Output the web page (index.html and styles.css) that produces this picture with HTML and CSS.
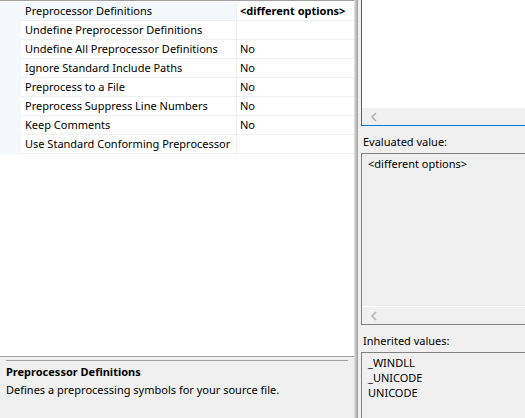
FILE: index.html
```html
<!DOCTYPE html>
<html>
<head>
<meta charset="utf-8">
<link rel="stylesheet" href="styles.css">
</head>
<body>
<div class="app">
  <div class="left">
    <div class="grid">
      <div class="row selected"><div class="gutter"></div><div class="name">Preprocessor Definitions</div><div class="value bold">&lt;different options&gt;</div></div>
      <div class="row"><div class="gutter"></div><div class="name">Undefine Preprocessor Definitions</div><div class="value"></div></div>
      <div class="row"><div class="gutter"></div><div class="name">Undefine All Preprocessor Definitions</div><div class="value">No</div></div>
      <div class="row"><div class="gutter"></div><div class="name">Ignore Standard Include Paths</div><div class="value">No</div></div>
      <div class="row"><div class="gutter"></div><div class="name">Preprocess to a File</div><div class="value">No</div></div>
      <div class="row"><div class="gutter"></div><div class="name">Preprocess Suppress Line Numbers</div><div class="value">No</div></div>
      <div class="row"><div class="gutter"></div><div class="name">Keep Comments</div><div class="value">No</div></div>
      <div class="row"><div class="gutter"></div><div class="name">Use Standard Conforming Preprocessor</div><div class="value"></div></div>
    </div>
    <div class="desc">
      <div class="desc-title">Preprocessor Definitions</div>
      <div class="desc-text">Defines a preprocessing symbols for your source file.</div>
    </div>
  </div>
  <div class="splitter"></div>
  <div class="right">
    <div class="box box-edit">
      <div class="box-content white"></div>
      <div class="hscroll"><svg class="chev" width="8" height="10" viewBox="0 0 8 10"><path d="M6 1 L2 5 L6 9" fill="none" stroke="#b4b4b4" stroke-width="1.6"/></svg></div>
    </div>
    <div class="label first">Evaluated value:</div>
    <div class="box box-eval">
      <div class="box-content eval-content"><div class="line">&lt;different options&gt;</div></div>
      <div class="hscroll topline"><svg class="chev" width="8" height="10" viewBox="0 0 8 10"><path d="M6 1 L2 5 L6 9" fill="none" stroke="#b4b4b4" stroke-width="1.6"/></svg></div>
    </div>
    <div class="label second">Inherited values:</div>
    <div class="box box-inh">
      <div class="box-content inh-content">
        <div class="line">_WINDLL</div>
        <div class="line">_UNICODE</div>
        <div class="line">UNICODE</div>
      </div>
    </div>
  </div>
</div>
</body>
</html>
```

FILE: styles.css
```css
html, body {
  margin: 0;
  padding: 0;
}
body {
  width: 525px;
  height: 418px;
  overflow: hidden;
  background: #f0f0f0;
  font-family: "Noto Sans", "Open Sans", sans-serif;
  font-size: 11px;
  color: #000;
}
.app {
  display: flex;
  width: 525px;
  height: 418px;
}
.left {
  width: 354px;
  display: flex;
  flex-direction: column;
  background: #fff;
  border-top: 1px solid #a0a0a0;
  box-sizing: border-box;
}
.grid {
  flex: 1;
  background: #fff;
  padding-top: 1px;
}
.row {
  display: flex;
  height: 19px;
  box-sizing: border-box;
}
.gutter {
  width: 21px;
  flex: none;
  background: #f4f7fb;
}
.name {
  width: 216px;
  flex: none;
  box-sizing: border-box;
  padding-left: 4px;
  line-height: 18px;
  border-bottom: 1px solid #eef0f2;
  border-right: 1px solid #eef0f2;
  white-space: nowrap;
  overflow: hidden;
}
.value {
  flex: 1;
  box-sizing: border-box;
  padding-left: 3px;
  line-height: 18px;
  border-bottom: 1px solid #eef0f2;
  white-space: nowrap;
  overflow: hidden;
}
.row.selected .name {
  background: #f4f7fb;
}
.bold {
  font-weight: bold;
}
.desc {
  height: 62px;
  box-sizing: border-box;
  border-top: 1px solid #a0a0a0;
  background: #f0f0f0;
  padding: 0 6px;
}
.desc::before {
  content: "";
  display: block;
  height: 3px;
  border-bottom: 1px solid #a0a0a0;
}
.desc-title {
  font-weight: bold;
  line-height: 18px;
  margin-top: 2px;
}
.desc-text {
  line-height: 18px;
}
.splitter {
  width: 4px;
  flex: none;
  background: linear-gradient(to right, #e4e4e4, #9a9a9a);
}
.right {
  flex: 1;
  overflow: hidden;
  padding-left: 3px;
  background: #f0f0f0;
}
.box {
  margin-right: -6px;
  border: 1px solid #828282;
  box-sizing: border-box;
}
.box-edit {
  border-color: #0078d7;
  margin-top: -1px;
}
.box-content.white {
  height: 108px;
  background: #fff;
}
.hscroll {
  height: 17px;
  background: #f0f0f0;
  display: flex;
  align-items: center;
  padding-left: 8px;
}
.hscroll.topline {
  border-top: 1px solid #fff;
}
.chev {
  display: block;
}
.label {
  line-height: 16px;
  padding-left: 2px;
  margin-bottom: 3px;
}
.label.first {
  margin-top: 8px;
}
.label.second {
  margin-top: 8px;
}
.box-eval {
  height: 172px;
  display: flex;
  flex-direction: column;
}
.eval-content {
  flex: 1;
  padding: 2px 6px 0;
}
.inh-content {
  height: 80px;
  padding: 2px 6px 0;
}
.line {
  line-height: 15px;
  white-space: nowrap;
}
```
